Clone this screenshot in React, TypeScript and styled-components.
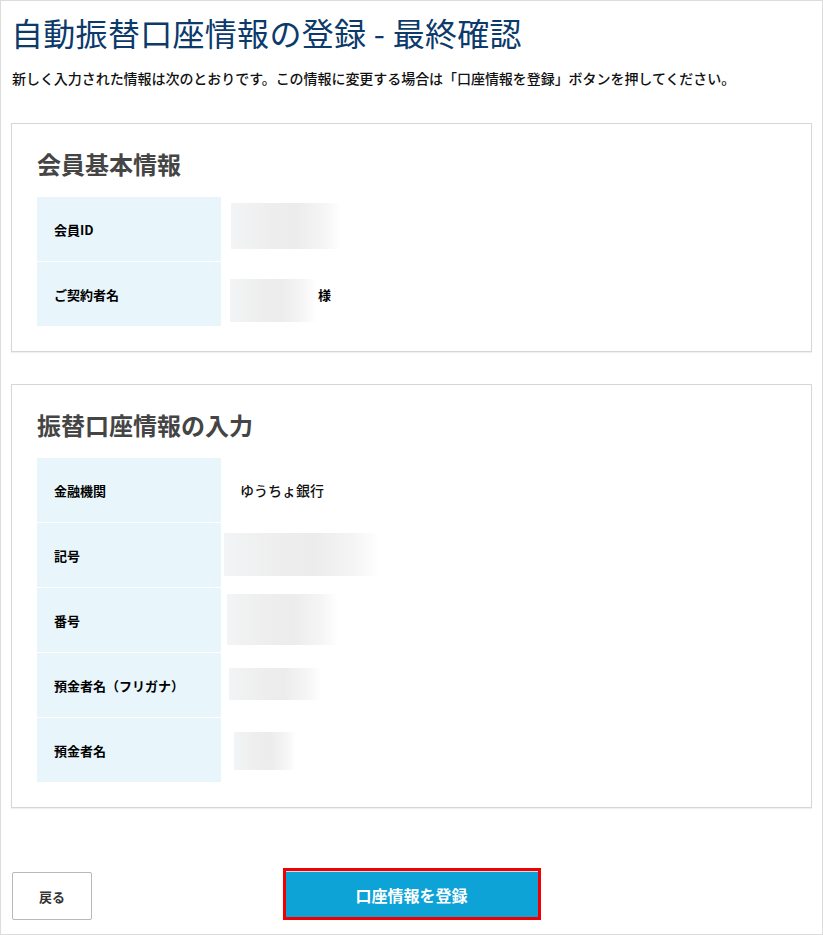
import React from "react";
import styled, { createGlobalStyle } from "styled-components";

const GlobalStyle = createGlobalStyle`
  html, body { margin: 0; padding: 0; background: #fff; }
  body { font-family: "Noto Sans CJK JP", "Noto Sans", sans-serif; color: #111; }
  * { box-sizing: border-box; }
`;

const Page = styled.div`
  width: 823px;
  height: 935px;
  border: 1px solid #dcdcdc;
  padding: 11px 10px 0 10px;
  display: flex;
  flex-direction: column;
`;

const Title = styled.h1`
  margin: 0;
  font-size: 32px;
  line-height: 40px;
  font-weight: 400;
  color: #0b3a6b;
  letter-spacing: 0.3px;
`;

const Lead = styled.p`
  margin: 16px 0 0 1px;
  font-size: 14px;
  line-height: 20px;
  font-weight: 500;
  letter-spacing: -0.05px;
  color: #111;
`;

const Card = styled.section<{ $mt: number }>`
  margin-top: ${(p) => p.$mt}px;
  border: 1px solid #d6d6d6;
  box-shadow: 0 1px 1px rgba(0, 0, 0, 0.06);
  padding: 24px 25px 25px 25px;
`;

const CardTitle = styled.h2`
  margin: 0 0 17px 0;
  font-size: 24px;
  line-height: 32px;
  font-weight: 700;
  color: #454545;
`;

const Table = styled.div`
  display: grid;
  grid-template-columns: 184px 1fr;
  row-gap: 1px;
`;

const Label = styled.div`
  height: 64px;
  background: #e8f6fc;
  display: flex;
  align-items: center;
  padding-left: 17px;
  font-size: 13px;
  font-weight: 700;
  color: #000;
`;

const Value = styled.div`
  height: 64px;
  display: flex;
  align-items: center;
  font-size: 14px;
  font-weight: 500;
  color: #111;
`;

const ValueText = styled.span<{ $x: number }>`
  margin-left: ${(p) => p.$x}px;
`;

const Suffix = styled.span`
  margin-left: 3px;
  font-size: 13px;
  font-weight: 700;
  color: #000;
`;

const Blur = styled.div<{ $x: number; $w: number; $h: number; $dy: number }>`
  margin-left: ${(p) => p.$x}px;
  width: ${(p) => p.$w}px;
  height: ${(p) => p.$h}px;
  margin-top: ${(p) => p.$dy * 2}px;
  background: linear-gradient(
    90deg,
    #f2f4f5 0%,
    #eeeeee 35%,
    #ececec 60%,
    #f5f5f5 85%,
    #fefefe 100%
  );
`;

const ButtonRow = styled.div`
  margin-top: 63px;
  display: grid;
  grid-template-columns: 1fr auto 1fr;
  align-items: end;
`;

const BackButton = styled.button`
  justify-self: start;
  margin-left: 1px;
  width: 80px;
  height: 48px;
  background: #fff;
  border: 1px solid #b9b9b9;
  border-radius: 2px;
  font-family: inherit;
  font-size: 13px;
  font-weight: 700;
  color: #333;
  cursor: pointer;
`;

const PrimaryButton = styled.button`
  width: 252px;
  height: 46px;
  margin-bottom: 3px;
  background: #0ea3d6;
  border: none;
  border-top: 1px solid #bfe3f1;
  outline: 3px solid #f00000;
  font-family: inherit;
  font-size: 16px;
  font-weight: 700;
  color: #fff;
  cursor: pointer;
`;

type Row = {
  label: string;
  text?: string;
  textX?: number;
  blur?: { x: number; w: number; h: number; dy: number };
  suffix?: string;
};

const memberRows: Row[] = [
  { label: "会員ID", blur: { x: 10, w: 109, h: 46, dy: -3 } },
  { label: "ご契約者名", blur: { x: 9, w: 85, h: 43, dy: 6 }, suffix: "様" },
];

const accountRows: Row[] = [
  { label: "金融機関", text: "ゆうちょ銀行", textX: 19 },
  { label: "記号", blur: { x: 3, w: 153, h: 43, dy: -1 } },
  { label: "番号", blur: { x: 6, w: 110, h: 51, dy: -1 } },
  { label: "預金者名（フリガナ）", blur: { x: 8, w: 91, h: 32, dy: -1 } },
  { label: "預金者名", blur: { x: 13, w: 61, h: 38, dy: 1 } },
];

function InfoTable({ rows }: { rows: Row[] }) {
  return (
    <Table>
      {rows.map((r) => (
        <React.Fragment key={r.label}>
          <Label>{r.label}</Label>
          <Value>
            {r.text && <ValueText $x={r.textX ?? 0}>{r.text}</ValueText>}
            {r.blur && (
              <Blur $x={r.blur.x} $w={r.blur.w} $h={r.blur.h} $dy={r.blur.dy} />
            )}
            {r.suffix && <Suffix>{r.suffix}</Suffix>}
          </Value>
        </React.Fragment>
      ))}
    </Table>
  );
}

export default function App() {
  return (
    <>
      <GlobalStyle />
      <Page>
        <Title>自動振替口座情報の登録 - 最終確認</Title>
        <Lead>
          新しく入力された情報は次のとおりです。この情報に変更する場合は「口座情報を登録」ボタンを押してください。
        </Lead>
        <Card $mt={35}>
          <CardTitle>会員基本情報</CardTitle>
          <InfoTable rows={memberRows} />
        </Card>
        <Card $mt={32}>
          <CardTitle>振替口座情報の入力</CardTitle>
          <InfoTable rows={accountRows} />
        </Card>
        <ButtonRow>
          <BackButton>戻る</BackButton>
          <PrimaryButton>口座情報を登録</PrimaryButton>
          <span />
        </ButtonRow>
      </Page>
    </>
  );
}
